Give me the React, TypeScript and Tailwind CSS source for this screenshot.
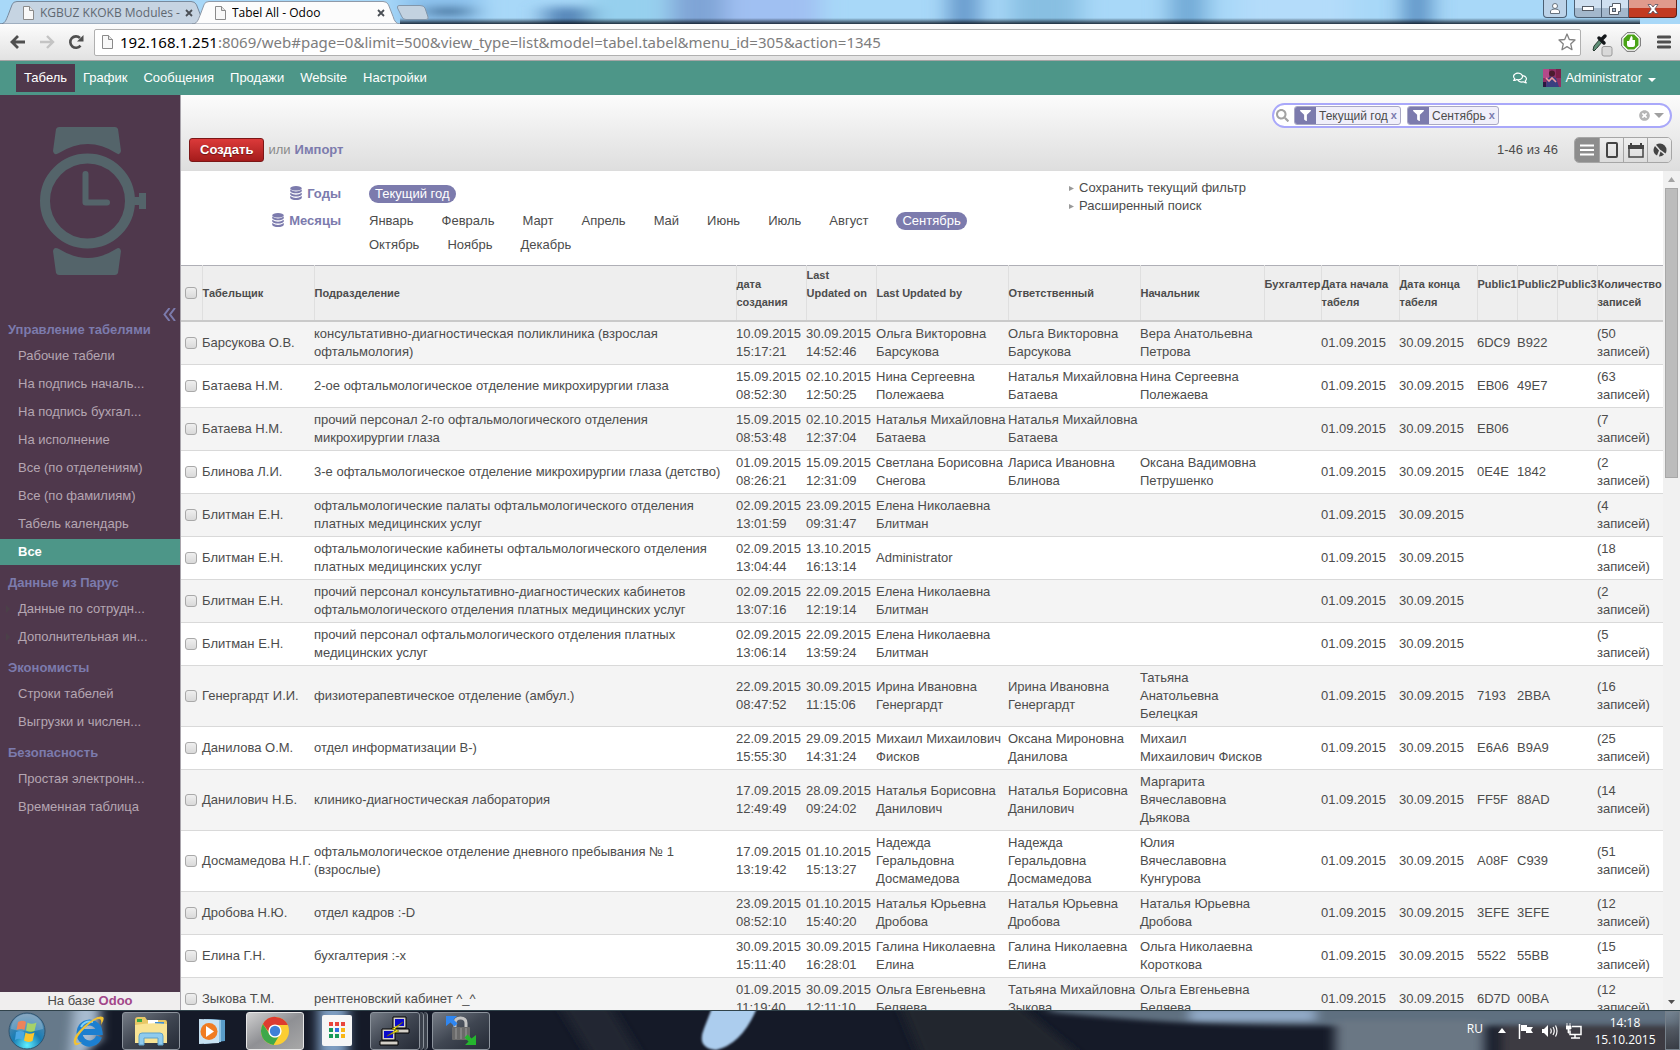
import { ReactNode } from "react";
import { FaFilter, FaRegComments, FaSearch, FaTimesCircle } from "react-icons/fa";

const menuSections = [
  {
    title: "Управление табелями",
    items: [
      "Рабочие табели",
      "На подпись началь...",
      "На подпись бухгал...",
      "На исполнение",
      "Все (по отделениям)",
      "Все (по фамилиям)",
      "Табель календарь",
      "Все",
    ],
  },
  { title: "Данные из Парус", items: ["Данные по сотрудн...", "Дополнительная ин..."], nested: true },
  { title: "Экономисты", items: ["Строки табелей", "Выгрузки и числен..."] },
  { title: "Безопасность", items: ["Простая электронн...", "Временная таблица"] },
];

const months = [
  "Январь", "Февраль", "Март", "Апрель", "Май", "Июнь", "Июль", "Август", "Сентябрь", "Октябрь", "Ноябрь", "Декабрь",
];

const columns = [
  { label: "Табельщик", width: "w-[112px]" },
  { label: "Подразделение", width: "" },
  { label: "дата\nсоздания", width: "w-[70px]" },
  { label: "Last\nUpdated on\n ", width: "w-[70px]" },
  { label: "Last Updated by", width: "w-[132px]" },
  { label: "Ответственный", width: "w-[132px]" },
  { label: "Начальник", width: "w-[124px]" },
  { label: "Бухгалтер\n ", width: "w-[57px]" },
  { label: "Дата начала\nтабеля", width: "w-[78px]" },
  { label: "Дата конца\nтабеля", width: "w-[78px]" },
  { label: "Public1\n ", width: "w-[40px]" },
  { label: "Public2\n ", width: "w-[40px]" },
  { label: "Public3\n ", width: "w-[40px]" },
  { label: "Количество\nзаписей", width: "w-[66px]" },
];

// name, department, created, updated, updated by, responsible, chief, key 1, key 2, record count
const rows: string[][] = [
  ["Барсукова О.В.", "консультативно-диагностическая поликлиника (взрослая\nофтальмология)", "10.09.2015\n15:17:21", "30.09.2015\n14:52:46", "Ольга Викторовна\nБарсукова", "Ольга Викторовна\nБарсукова", "Вера Анатольевна\nПетрова", "6DC9", "B922", "50"],
  ["Батаева Н.М.", "2-ое офтальмологическое отделение микрохирургии глаза", "15.09.2015\n08:52:30", "02.10.2015\n12:50:25", "Нина Сергеевна\nПолежаева", "Наталья Михайловна\nБатаева", "Нина Сергеевна\nПолежаева", "EB06", "49E7", "63"],
  ["Батаева Н.М.", "прочий персонал 2-го офтальмологического отделения\nмикрохирургии глаза", "15.09.2015\n08:53:48", "02.10.2015\n12:37:04", "Наталья Михайловна\nБатаева", "Наталья Михайловна\nБатаева", "", "EB06", "", "7"],
  ["Блинова Л.И.", "3-е офтальмологическое отделение микрохирургии глаза (детство)", "01.09.2015\n08:26:21", "15.09.2015\n12:31:09", "Светлана Борисовна\nСнегова", "Лариса Ивановна\nБлинова", "Оксана Вадимовна\nПетрушенко", "0E4E", "1842", "2"],
  ["Блитман Е.Н.", "офтальмологические палаты офтальмологического отделения\nплатных медицинских услуг", "02.09.2015\n13:01:59", "23.09.2015\n09:31:47", "Елена Николаевна\nБлитман", "", "", "", "", "4"],
  ["Блитман Е.Н.", "офтальмологические кабинеты офтальмологического отделения\nплатных медицинских услуг", "02.09.2015\n13:04:44", "13.10.2015\n16:13:14", "Administrator", "", "", "", "", "18"],
  ["Блитман Е.Н.", "прочий персонал консультативно-диагностических кабинетов\nофтальмологического отделения платных медицинских услуг", "02.09.2015\n13:07:16", "22.09.2015\n12:19:14", "Елена Николаевна\nБлитман", "", "", "", "", "2"],
  ["Блитман Е.Н.", "прочий персонал офтальмологического отделения платных\nмедицинских услуг", "02.09.2015\n13:06:14", "22.09.2015\n13:59:24", "Елена Николаевна\nБлитман", "", "", "", "", "5"],
  ["Генергардт И.И.", "физиотерапевтическое отделение (амбул.)", "22.09.2015\n08:47:52", "30.09.2015\n11:15:06", "Ирина Ивановна\nГенергардт", "Ирина Ивановна\nГенергардт", "Татьяна\nАнатольевна\nБелецкая", "7193", "2BBA", "16"],
  ["Данилова О.М.", "отдел информатизации B-)", "22.09.2015\n15:55:30", "29.09.2015\n14:31:24", "Михаил Михаилович\nФисков", "Оксана Мироновна\nДанилова", "Михаил\nМихаилович Фисков", "E6A6", "B9A9", "25"],
  ["Данилович Н.Б.", "клинико-диагностическая лаборатория", "17.09.2015\n12:49:49", "28.09.2015\n09:24:02", "Наталья Борисовна\nДанилович", "Наталья Борисовна\nДанилович", "Маргарита\nВячеславовна\nДьякова", "FF5F", "88AD", "14"],
  ["Досмамедова Н.Г.", "офтальмологическое отделение дневного пребывания № 1\n(взрослые)", "17.09.2015\n13:19:42", "01.10.2015\n15:13:27", "Надежда\nГеральдовна\nДосмамедова", "Надежда\nГеральдовна\nДосмамедова", "Юлия\nВячеславовна\nКунгурова", "A08F", "C939", "51"],
  ["Дробова Н.Ю.", "отдел кадров :-D", "23.09.2015\n08:52:10", "01.10.2015\n15:40:20", "Наталья Юрьевна\nДробова", "Наталья Юрьевна\nДробова", "Наталья Юрьевна\nДробова", "3EFE", "3EFE", "12"],
  ["Елина Г.Н.", "бухгалтерия :-x", "30.09.2015\n15:11:40", "30.09.2015\n16:28:01", "Галина Николаевна\nЕлина", "Галина Николаевна\nЕлина", "Ольга Николаевна\nКороткова", "5522", "55BB", "15"],
  ["Зыкова Т.М.", "рентгеновский кабинет ^_^", "01.09.2015\n11:19:40", "30.09.2015\n12:11:10", "Ольга Евгеньевна\nБеляева", "Татьяна Михайловна\nЗыкова", "Ольга Евгеньевна\nБеляева", "6D7D", "00BA", "12"],
];

function PageIcon() {
  return (
    <svg width="11" height="14" viewBox="0 0 11 14" className="shrink-0">
      <path d="M.5.5h6l4 4v9H.5z" fill="#f8f8f8" stroke="#8a8a8a" />
      <path d="M6.500.500v4h4" fill="#e4e4e4" stroke="#8a8a8a" />
    </svg>
  );
}

function CloseGlyph() {
  return (
    <svg width="8" height="8" viewBox="0 0 8 8">
      <path d="M1 1l6 6M7 1L1 7" stroke="#4a4f55" strokeWidth="1.800" />
    </svg>
  );
}

function Tab({ title, active }: { title: string; active?: boolean }) {
  return (
    <div className={active ? "relative z-10 -ml-4 w-[208px] self-stretch" : "relative w-[208px] self-stretch"}>
      <svg className="absolute inset-0 h-full w-full" viewBox="0 0 208 24" preserveAspectRatio="none">
        <path
          d="M0 24C5 24 6 20 8 15L12 4Q13 .5 17 .5H191Q195 .5 196.500 4L201 16Q203 24 208 24Z"
          fill={active ? "#fcfcfc" : "#c6d4e2"}
          stroke={active ? "#8b97a5" : "#75869a"}
        />
      </svg>
      <div className="relative flex h-full items-center pr-[15px] pl-[23px]">
        <PageIcon />
        <span className={active ? "ml-[6px] flex-1 truncate text-[12px] text-black" : "ml-[6px] flex-1 truncate text-[12px] text-[#5f6871]"}>
          {title}
        </span>
        <button aria-label="Закрыть вкладку"><CloseGlyph /></button>
      </div>
    </div>
  );
}

function TitleBar() {
  return (
    <header className="relative flex h-6 shrink-0 items-stretch overflow-hidden bg-[#a4d0f0]">
      <svg className="absolute inset-0 h-full w-full" viewBox="0 0 1680 24" preserveAspectRatio="none">
        <defs>
          <filter id="soft" x="-20%" y="-50%" width="140%" height="200%"><feGaussianBlur stdDeviation="12 4" /></filter>
          <linearGradient id="edge" x1="0" y1="0" x2="0" y2="1">
            <stop offset="0" stopColor="#0a1420" stopOpacity="0" />
            <stop offset="1" stopColor="#0a1420" />
          </linearGradient>
        </defs>
        <rect width="1680" height="24" fill="#a8d8f8" />
        <g filter="url(#soft)">
          <rect x="400" y="-15" width="80" height="54" fill="#8ec3ee" />
          <rect x="425" y="7" width="46" height="9" fill="#3f6f9a" />
          <rect x="545" y="7" width="45" height="30" fill="#5585b8" />
          <rect x="590" y="-15" width="75" height="54" fill="#96d0ee" />
          <rect x="670" y="-15" width="55" height="54" fill="#7fa4d6" />
          <rect x="725" y="-15" width="95" height="54" fill="#a0c0f2" />
          <rect x="950" y="-15" width="28" height="54" fill="#5f92c6" />
          <rect x="1010" y="-15" width="70" height="54" fill="#88bfe2" />
          <rect x="1170" y="-15" width="35" height="54" fill="#6fa8d4" />
          <rect x="1240" y="-15" width="110" height="54" fill="#b4dcfa" />
          <rect x="1405" y="-15" width="24" height="54" fill="#4f86bc" />
        </g>
        <rect x="400" y="18" width="1240" height="7" fill="url(#edge)" />
      </svg>
      <div className="relative flex flex-1 font-['Open_Sans','Noto_Sans',sans-serif]">
        <div className="flex pt-px">
          <Tab title="KGBUZ KKOKB Modules -" />
          <Tab title="Tabel All - Odoo" active />
          <button aria-label="Новая вкладка" className="mt-1 -ml-1 h-[15px]">
            <svg width="34" height="15" viewBox="0 0 34 15">
              <path d="M3 .5H24Q28 .5 29 3L32 12Q33 14.500 30 14.500H10Q7 14.500 6 12L1.500 3Q1 .5 3 .5Z" fill="#c3d2e0" stroke="#8296aa" />
            </svg>
          </button>
        </div>
        <div className="ml-auto flex items-start pr-[3px]">
          <button aria-label="Пользователь" className="mr-[7px] flex h-[18px] w-6 items-center justify-center rounded-b border border-t-0 border-[#4b5f73] bg-[#bcd3e8]">
            <svg width="10" height="11" viewBox="0 0 10 11"><circle cx="5" cy="3" r="2.500" fill="#fff" stroke="#66727e" /><path d="M.5 10.500V8Q1 6 5 6t4.500 2v2.500z" fill="#fff" stroke="#66727e" /></svg>
          </button>
          <button aria-label="Свернуть" className="flex h-[18px] w-7 items-center justify-center rounded-bl border border-t-0 border-[#4b5f73] bg-linear-to-b from-[#cfe0f0] from-50% to-[#a3b8cc] to-50%">
            <svg width="12" height="5" viewBox="0 0 12 5"><rect x=".5" y=".5" width="11" height="4" fill="#fff" stroke="#555c66" /></svg>
          </button>
          <button aria-label="Восстановить" className="flex h-[18px] w-[27px] items-center justify-center border-r border-b border-[#4b5f73] bg-linear-to-b from-[#cfe0f0] from-50% to-[#a3b8cc] to-50%">
            <svg width="12" height="12" viewBox="0 0 12 12"><path d="M3.500.500h8v8h-2v3h-9v-8h3z" fill="#fff" stroke="#555c66" /><rect x="3.500" y="5.500" width="3" height="3" fill="#a9bdd0" stroke="#555c66" /></svg>
          </button>
          <button aria-label="Закрыть" className="flex h-[18px] w-12 items-center justify-center rounded-br border border-t-0 border-l-0 border-[#5a2018] bg-linear-to-b from-[#e09a8c] from-50% to-[#c23a22] to-50%">
            <svg width="12" height="10" viewBox="0 0 12 10"><path d="M1 .5h3l2 2.500 2-2.500h3L7.800 5 11 9.500H8L6 7 4 9.500H1L4.200 5z" fill="#fff" stroke="#565060" strokeWidth=".8" /></svg>
          </button>
        </div>
      </div>
    </header>
  );
}

function Toolbar() {
  return (
    <div className="flex h-[37px] shrink-0 items-center border-b border-[#a5a5a5] bg-linear-to-b from-[#fcfcfc] to-[#e2e2e2] pr-[9px] pl-[10px]">
      <button aria-label="Назад">
        <svg width="16" height="14" viewBox="0 0 16 14"><path d="M15 7H2.500M8 1L2 7l6 6" fill="none" stroke="#4f4f4f" strokeWidth="2.800" /></svg>
      </button>
      <button aria-label="Вперёд" className="ml-[13px]">
        <svg width="16" height="14" viewBox="0 0 16 14"><path d="M1 7h12.500M8 1l6 6-6 6" fill="none" stroke="#c4c4c4" strokeWidth="2.400" /></svg>
      </button>
      <button aria-label="Обновить" className="ml-[13px]">
        <svg width="16" height="16" viewBox="0 0 16 16"><path d="M12.500 11.600A5.700 5.700 0 1 1 12 4" fill="none" stroke="#4f4f4f" strokeWidth="2.600" /><path d="M15.500 1v6.500H9z" fill="#4f4f4f" /></svg>
      </button>
      <div className="ml-[10px] flex h-[27px] min-w-0 flex-1 items-center rounded-[2px] border border-[#b0b0b0] bg-white pr-1 pl-[7px] font-['Noto_Sans','Open_Sans',sans-serif] text-[15px]">
        <PageIcon />
        <span className="ml-[7px] text-black">192.168.1.251</span>
        <input
          aria-label="Адрес"
          className="min-w-0 flex-1 bg-transparent text-[#7d7d7d] outline-none"
          defaultValue=":8069/web#page=0&limit=500&view_type=list&model=tabel.tabel&menu_id=305&action=1345"
        />
        <svg width="18" height="18" viewBox="0 0 18 18"><path d="M9 1l2.300 5.500 5.700.5-4.300 3.900 1.300 5.800L9 13.600l-5 3.100 1.300-5.800L1 7l5.700-.5z" fill="#fff" stroke="#828282" strokeWidth="1.300" strokeLinejoin="round" /></svg>
      </div>
      <svg className="mt-[6px] ml-[10px]" width="22" height="24" viewBox="0 0 22 24">
        <path d="M2 17l1-4 6-7 2.500 2.500-6 7-2.500 2.500z" fill="#5f8f77" stroke="#263a30" />
        <path d="M8 5l5 5M10 7l4-4" stroke="#14171a" strokeWidth="3.500" strokeLinecap="round" />
        <rect x="11" y="13.500" width="10" height="9.500" rx="2" fill="#d9d9d9" stroke="#9a9a9a" />
      </svg>
      <svg className="ml-2" width="20" height="20" viewBox="0 0 20 20">
        <path d="M6 .7h8L19.300 6v8L14 19.300H6L.7 14V6z" fill="#fff" stroke="#666" />
        <path d="M6.800 2.500h6.400l4.300 4.300v6.400l-4.300 4.300H6.800l-4.300-4.300V6.800z" fill="#4aa316" />
        <path d="M6 9h2l2-5q2 0 1.500 4H14v5q0 2-2 2H8q-2 0-2-2z" fill="#fff" />
      </svg>
      <button aria-label="Меню" className="ml-4">
        <svg width="14" height="14" viewBox="0 0 14 14"><path d="M1 2h12M1 7h12M1 12h12" stroke="#4f4f4f" strokeWidth="2.800" strokeLinecap="round" /></svg>
      </button>
    </div>
  );
}

function TopNav() {
  const links = ["График", "Сообщения", "Продажи", "Website", "Настройки"];
  return (
    <nav className="flex h-[34px] shrink-0 items-center bg-[#4d9688] pr-6 pl-4 text-[13px] text-white">
      <a href="#tabel" className="flex h-7 items-center bg-[#4f384c] px-2">Табель</a>
      {links.map((l) => (
        <a key={l} href={"#" + l} className="flex h-7 items-center px-2">{l}</a>
      ))}
      <button aria-label="Сообщения" className="ml-auto"><FaRegComments size={14} /></button>
      <svg className="ml-4" width="18" height="18" viewBox="0 0 18 18">
        <rect width="18" height="18" fill="#8f2f66" />
        <path d="M0 0h6v9H0z" fill="#b34a8a" /><path d="M13 0h5v9h-5z" fill="#7a1f4a" />
        <path d="M3 18l1-8 4-3 5 2 3 9z" fill="#3a3f80" /><circle cx="9" cy="4.500" r="3" fill="#4a1c2e" />
        <path d="M3 9l3 3 3-3 4 4" stroke="#f09aa0" strokeWidth="1.600" fill="none" /><path d="M0 13h3v5H0z" fill="#2b1740" />
      </svg>
      <button className="ml-1 flex items-center">
        Administrator
        <svg className="mt-1 ml-[6px]" width="8" height="4" viewBox="0 0 8 4"><path d="M0 0h8L4 4z" fill="#fff" /></svg>
      </button>
    </nav>
  );
}

function Sidebar() {
  return (
    <aside className="flex w-[181px] shrink-0 flex-col border-r border-[#a9a5ac] bg-[#4f384c] text-[13px]">
      <svg className="mt-[31px] ml-10 shrink-0" width="107" height="150" viewBox="0 0 107 150">
        <g fill="#54646a">
          <path d="M19 1H75Q77 1 78 3L81 25Q80 30 76 27Q48 9 19 27Q14 30 13 25L16 3Q17 1 19 1Z" />
          <path d="M19 149H75Q77 149 78 147L81 125Q80 120 76 123Q48 141 19 123Q14 120 13 125L16 147Q17 149 19 149Z" />
          <path d="M94 71h5v-4h7v16h-7v-4h-5z" />
        </g>
        <circle cx="47.500" cy="75" r="42.500" fill="none" stroke="#54646a" strokeWidth="10" />
        <path d="M45.500 48V76.500H67" fill="none" stroke="#54646a" strokeWidth="6" strokeLinecap="round" strokeLinejoin="round" />
      </svg>
      <button aria-label="Свернуть меню" className="mt-8 mr-1 self-end">
        <svg width="13" height="13" viewBox="0 0 13 13"><path d="M6.500 0L1.500 6.500l5 6.500M12 0L7 6.500l5 6.500" fill="none" stroke="#7c7bad" strokeWidth="2" /></svg>
      </button>
      <div className="-mt-[7px]">
        {menuSections.map((s) => (
          <section key={s.title} className="pt-[7px]">
            <h2 className="mb-1 pl-2 leading-[18px] font-bold text-[#7c7bad]">{s.title}</h2>
            {s.items.map((item) => (
              <a
                key={item}
                href={"#" + item}
                className={
                  item === "Все"
                    ? "relative mb-[2px] block bg-[#4d9688] pl-[18px] leading-[26px] font-bold text-white"
                    : "relative mb-[2px] block pl-[18px] leading-[26px] text-[#b5a6b2]"
                }
              >
                {s.nested && (
                  <svg className="absolute top-[9px] left-[6px]" width="4" height="8" viewBox="0 0 4 8"><path d="M0 0l4 4-4 4z" fill="#4b4048" /></svg>
                )}
                {item}
              </a>
            ))}
          </section>
        ))}
      </div>
      <div className="mt-auto bg-[#f0eeee] text-center leading-[18px] text-[#4c4c4c]">
        На базе <a href="#odoo" className="font-bold text-[#a24689]">Odoo</a>
      </div>
    </aside>
  );
}

function Facet({ label }: { label: string }) {
  return (
    <span className="mr-[6px] flex h-[19px] items-center overflow-hidden rounded-[3px] border border-[#a9a8c4] bg-[#f0effa] text-[12px] text-[#4c4c4c]">
      <span className="flex h-full w-[21px] items-center justify-center bg-[#7c7bad] text-white"><FaFilter size={11} /></span>
      <span className="pl-[3px] whitespace-nowrap">{label}</span>
      <button aria-label={"Убрать " + label} className="px-[3px] text-[11px] font-bold text-[#7c7bad]">x</button>
    </span>
  );
}

function ViewButton({ label, active, children }: { label: string; active?: boolean; children: ReactNode }) {
  return (
    <button
      aria-label={label}
      className={
        active
          ? "flex w-6 items-center justify-center bg-[#8d8d8d]"
          : "flex w-6 items-center justify-center border-l border-[#a6a6a6] bg-linear-to-b from-[#efefef] to-[#dcdcdc]"
      }
    >
      {children}
    </button>
  );
}

function ControlPanel() {
  return (
    <div className="flex h-[76px] shrink-0 flex-col border-b border-[#dcdcdc] bg-linear-to-b from-[#fcfcfc] to-[#dedede] pt-2 pr-2 pl-2">
      <div className="flex h-[25px] w-[400px] items-center self-end rounded-full border-2 border-[#a9a8fa] bg-white pr-[6px] pl-[2px]">
        <FaSearch size={13} className="mr-[5px] text-[#a3a3a3]" />
        <Facet label="Текущий год" />
        <Facet label="Сентябрь" />
        <input aria-label="Поиск" className="min-w-0 flex-1 bg-transparent outline-none" />
        <button aria-label="Очистить" className="text-[#b5b5b5]"><FaTimesCircle size={11} /></button>
        <button aria-label="Раскрыть поиск" className="ml-1">
          <svg width="10" height="5" viewBox="0 0 10 5"><path d="M0 0h10L5 5z" fill="#a0a0a0" /></svg>
        </button>
      </div>
      <div className="mt-[9px] flex items-center text-[13px]">
        <button className="h-6 rounded-[3px] border border-[#7c1717] bg-linear-to-b from-[#dc3a3a] to-[#a51b1b] px-[10px] font-bold text-white [text-shadow:0_1px_1px_rgba(0,0,0,0.4)]">
          Создать
        </button>
        <span className="ml-1 text-[#8a8a8a]">или</span>
        <a href="#import" className="ml-1 font-bold text-[#7c7bad]">Импорт</a>
        <span className="mr-4 ml-auto text-[#4c4c4c]">1-46 из 46</span>
        <div className="flex h-[26px] overflow-hidden rounded-[5px] border border-[#a6a6a6]">
          <ViewButton label="Список" active>
            <svg width="14" height="12" viewBox="0 0 14 12"><path d="M0 1.500h14M0 6h14M0 10.500h14" stroke="#fff" strokeWidth="2" /></svg>
          </ViewButton>
          <ViewButton label="Форма">
            <svg width="12" height="16" viewBox="0 0 12 16"><rect x="1" y="1" width="10" height="14" rx="1" fill="none" stroke="#444" strokeWidth="2" /></svg>
          </ViewButton>
          <ViewButton label="Календарь">
            <svg width="16" height="16" viewBox="0 0 16 16"><path d="M1 4v11h14V4" fill="none" stroke="#444" strokeWidth="1.500" /><path d="M0 3h2V1h2v2h8V1h2v2h2v4H0z" fill="#444" /></svg>
          </ViewButton>
          <ViewButton label="График">
            <svg width="14" height="14" viewBox="0 0 14 14"><path d="M7 .5A6.500 6.500 0 0 1 13.500 7q0 2-1 3.500L7 6.500 3 1.800Q5 .5 7 .5z" fill="#444" /><path d="M2 3L6 7.500 4 12.500Q.5 10.500.5 7 .6 4.800 2 3z" fill="#444" /><path d="M7.500 8.500l3.500 3Q9 13.500 6 13.400z" fill="#444" /></svg>
          </ViewButton>
        </div>
      </div>
    </div>
  );
}

function GroupLabel({ text }: { text: string }) {
  return (
    <div className="flex w-[160px] items-center justify-end gap-[5px] leading-6 font-bold text-[#7c7bad]">
      <svg className="mb-[3px]" width="12" height="14" viewBox="0 0 12 14" fill="#7c7bad">
        <ellipse cx="6" cy="2.300" rx="5.800" ry="2.300" />
        <path d="M.2 3.600Q6 7.400 11.800 3.600V5.200Q10.500 7.200 6 7.200T.2 5.200z" />
        <path d="M.2 6.800Q6 10.600 11.800 6.800V8.500Q10.500 10.500 6 10.500T.2 8.500z" />
        <path d="M.2 10.100Q6 13.900 11.800 10.100V11.900Q10.500 13.900 6 13.900T.2 11.900z" />
      </svg>
      {text}
    </div>
  );
}

const pill = "flex h-[18px] items-center rounded-full bg-[#7c7bad] px-[6px] text-white";

function Filters() {
  return (
    <div className="flex h-[94px] shrink-0 justify-between text-[13px] text-[#4c4c4c]">
      <div className="w-[860px] pt-[11px]">
        <div className="flex items-center">
          <GroupLabel text="Годы" />
          <button className={"ml-7 " + pill}>Текущий год</button>
        </div>
        <div className="mt-[3px] flex items-start">
          <GroupLabel text="Месяцы" />
          <div className="ml-7 flex flex-1 flex-wrap items-center gap-x-[28px]">
            {months.map((m) => (
              <span key={m} className="flex h-6 items-center">
                <button className={m === "Сентябрь" ? pill : ""}>{m}</button>
              </span>
            ))}
          </div>
        </div>
      </div>
      <ul className="w-[594px] pt-2 leading-[18px]">
        {["Сохранить текущий фильтр", "Расширенный поиск"].map((t) => (
          <li key={t} className="flex items-center">
            <svg className="mr-[5px]" width="5" height="5" viewBox="0 0 5 5"><path d="M0 0l5 2.500L0 5z" fill="#999" /></svg>
            <a href={"#" + t}>{t}</a>
          </li>
        ))}
      </ul>
    </div>
  );
}

function Check({ label }: { label: string }) {
  return (
    <input
      type="checkbox"
      aria-label={label}
      className="block h-[12px] w-[12px] appearance-none rounded-[3px] border border-[#a9a9a9] bg-linear-to-b from-[#efefef] to-[#d9d9d9]"
    />
  );
}

function Records() {
  return (
    <table className="w-full table-fixed border-collapse text-left text-[13px] leading-[18px] text-[#4c4c4c]">
      <colgroup>
        <col className="w-[21px]" />
        {columns.map((c) => <col key={c.label} className={c.width} />)}
      </colgroup>
      <thead>
        <tr className="border-t border-b-2 border-t-[#afafb6] border-b-[#cacaca] bg-[#eeeeee] text-[11px]">
          <th className="pl-1"><Check label="Выбрать все" /></th>
          {columns.map((c) => (
            <th key={c.label} className="h-[55px] border-l border-[#dfdfdf] p-0 font-bold whitespace-pre">{c.label}</th>
          ))}
        </tr>
      </thead>
      <tbody>
        {rows.map((r, i) => (
          <tr key={i} className="border-b border-[#d9d9d9] odd:bg-[#f4f4f4] even:bg-white">
            <td className="pl-1"><Check label={r[0]} /></td>
            {[...r.slice(0, 7), "", "01.09.2015", "30.09.2015", r[7], r[8], "", `(${r[9]}\nзаписей)`].map((v, j) => (
              <td key={j} className="px-0 py-[3px] whitespace-pre">{v}</td>
            ))}
          </tr>
        ))}
      </tbody>
    </table>
  );
}

function ScrollBar() {
  return (
    <div className="flex w-[17px] shrink-0 flex-col items-center bg-[#f1f1f1]">
      <svg className="my-[6px] shrink-0" width="7" height="5" viewBox="0 0 7 5"><path d="M0 5h7L3.500 0z" fill="#a3a3a3" /></svg>
      <div className="h-[290px] w-[13px] border border-[#a8a8a8] bg-[#bcbcbc]" />
      <svg className="mt-auto mb-[6px]" width="7" height="4" viewBox="0 0 7 4"><path d="M0 0h7L3.500 4z" fill="#505050" /></svg>
    </div>
  );
}

const taskButton =
  "flex h-[38px] items-center justify-center rounded-[3px] border border-[#8c939c] bg-linear-to-br from-[#8d949d]/80 via-[#4a515c]/80 to-[#2a303b]/80";

function Taskbar() {
  return (
    <footer className="relative flex h-10 shrink-0 items-center overflow-hidden border-t border-[#31434b] bg-[#151a28] font-['Open_Sans','Noto_Sans',sans-serif] text-white">
      <svg className="absolute inset-0 h-full w-full" viewBox="0 0 1680 40" preserveAspectRatio="none">
        <defs>
          <filter id="haze" x="-20%" y="-50%" width="140%" height="200%"><feGaussianBlur stdDeviation="6 3" /></filter>
          <filter id="faint" x="-20%" y="-20%" width="140%" height="140%"><feGaussianBlur stdDeviation="1" /></filter>
        </defs>
        <rect width="1680" height="40" fill="#151a28" />
        <g filter="url(#haze)">
          <rect x="-20" y="-10" width="105" height="60" fill="#66798a" />
          <path d="M75-5h25v35q-15 10-15 20h-15z" fill="#a8bcd0" />
          <rect x="318" y="-5" width="30" height="50" fill="#7d9cc0" />
          <path d="M560-5h50l30 50h-50z" fill="#242833" />
          <path d="M900-5h120l60 50H920z" fill="#20252f" />
          <path d="M1050-5h630v20H1300q-120 0-250-14z" fill="#5f6f80" />
          <rect x="1190" y="-2" width="125" height="12" fill="#90a9c6" />
          <rect x="1335" y="10" width="150" height="40" fill="#6b7784" />
          <rect x="1500" y="14" width="180" height="36" fill="#3c3a42" />
        </g>
        <path d="M712-3h45Q742 34 716 40 696 38 704 18z" fill="#accdee" filter="url(#faint)" />
      </svg>
      <div className="relative flex flex-1 items-center pr-[98px] pl-2">
        <button aria-label="Пуск">
          <svg width="38" height="38" viewBox="0 0 38 38">
            <defs><radialGradient id="orb" cx=".5" cy=".9" r=".9"><stop offset="0" stopColor="#5ff0ff" /><stop offset=".45" stopColor="#187cb4" /><stop offset="1" stopColor="#6b8fae" /></radialGradient></defs>
            <circle cx="19" cy="19" r="18" fill="url(#orb)" stroke="#31546e" />
            <path d="M10 10q5-2.500 8 0l-1.500 8q-4-2-8 0z" fill="#e8602c" /><path d="M19.500 10.500q4 2.500 9 0l-2 8.500q-5 2-8.500-.5z" fill="#8dc63f" />
            <path d="M8 20q4-2 8.500 0L15 28q-4-2.500-8 0z" fill="#4aa7e4" /><path d="M17.500 20.500q4 2.500 9 0L24.500 29q-5 2-8.500-.5z" fill="#fbc52d" />
            <path d="M3 17A16 15 0 0 1 35 17Q19 22 3 17z" fill="#fff" opacity=".22" />
          </svg>
        </button>
        <svg className="ml-[26px]" width="34" height="32" viewBox="0 0 34 32">
          <path d="M27 21.500A10 10.500 0 1 1 27.500 17H10" fill="none" stroke="#1c7fd0" strokeWidth="6" />
          <path d="M9 12Q13 5 21 7" fill="none" stroke="#7fd0f8" strokeWidth="2" />
          <path d="M3 30Q-2 24 12 11 26-1 31 2q2 2-2 8 1-6-2-6-5 0-14 9T4 27q1 2 6 0Q5 31 3 30z" fill="#f2c233" />
        </svg>
        <div className={"ml-4 w-[58px] " + taskButton}>
          <svg width="34" height="30" viewBox="0 0 34 30">
            <path d="M1 4q0-3 3-3h7l2 3h18q2 0 2 2v20H1z" fill="#e8c766" /><path d="M3 3h5v3H3z" fill="#39a845" /><path d="M14 4h10v4H14z" fill="#fff" /><path d="M21 6h9v3h-9z" fill="#3f8fd8" />
            <path d="M1 9q16-3 32-1v19H1z" fill="#f8e394" /><path d="M5 29v-9q0-3 3-3h18q3 0 3 3v9h-5v-7H10v7z" fill="#8fcbee" stroke="#5da1cc" />
          </svg>
        </div>
        <svg className="ml-[19px]" width="26" height="28" viewBox="0 0 26 28">
          <path d="M8 2l18 1v21l-18 2z" fill="#5a9cc8" /><path d="M5 2l17 1v22l-17 2z" fill="#8fc4e4" /><path d="M0 2l20 1v23L0 27z" fill="#c8e2f2" />
          <circle cx="10" cy="14.500" r="8.500" fill="#f07c22" /><path d="M7 9l8 5.500L7 20z" fill="#fff" />
        </svg>
        <div className="ml-[21px] flex h-[38px] w-[58px] items-center justify-center rounded-[3px] border border-[#e6e6e6] bg-linear-to-br from-[#d0d0d0] via-[#8f9094] to-[#a8a8a8]">
          <svg width="30" height="30" viewBox="0 0 30 30">
            <circle cx="15" cy="15" r="14" fill="#fbce33" />
            <path d="M2.900 8A14 14 0 0 1 27.800 9H15a6 6 0 0 0-5.800 7.500z" fill="#dd3b2f" />
            <path d="M2.900 8A14 14 0 0 0 13.500 29l5.500-9A6 6 0 0 1 9.500 18z" fill="#3ea84a" />
            <circle cx="15" cy="15" r="6.600" fill="#fff" /><circle cx="15" cy="15" r="5.200" fill="#3f80d6" />
          </svg>
        </div>
        <svg className="ml-[18px]" width="30" height="31" viewBox="0 0 30 31">
          <rect width="30" height="31" rx="2" fill="#f6f6f6" />
          <path d="M7 7h4v4H7zM13 7h4v4h-4zM19 7h4v4h-4z" fill="#e8453c" />
          <path d="M7 13h4v4H7zM7 19h4v4H7zM13 19h4v4h-4z" fill="#189a58" />
          <path d="M13 13h4v4h-4z" fill="#2f6fe0" /><path d="M19 13h4v4h-4zM19 19h4v4h-4z" fill="#f9b616" />
        </svg>
        <div className={"ml-[18px] w-[50px] " + taskButton}>
          <svg width="32" height="30" viewBox="0 0 32 30">
            <path d="M14 1h13v11H14zM12 13h18v4H12z" fill="#d4d0c8" stroke="#000" /><path d="M16 3h9v7h-9z" fill="#0a0acc" />
            <path d="M3 13h13v11H3zM1 25h18v4H1z" fill="#d4d0c8" stroke="#000" /><path d="M5 15h9v7H5z" fill="#0a0acc" />
            <path d="M24 6L13 13l4 1-9 6 12-5-4-2z" fill="#ffef1e" stroke="#6b6400" strokeWidth=".6" />
          </svg>
        </div>
        <div className="h-[38px] w-1 rounded-r border-r border-[#8c939c] bg-[#3a404b]" />
        <div className="h-[38px] w-1 rounded-r border-r border-[#8c939c] bg-[#3a404b]" />
        <div className={"ml-1 w-[58px] " + taskButton}>
          <svg width="32" height="31" viewBox="0 0 32 31">
            <path d="M10 12V8q0-5 5.500-5T21 8v4" fill="none" stroke="#c4c4c4" strokeWidth="3" /><rect x="7" y="12" width="18" height="13" rx="1" fill="#6a6a6a" /><path d="M11 13v11M16 13v11M21 13v11" stroke="#9a9a9a" />
            <path d="M1 1h11L8.500 4.500l4 4-3 3-4-4L1 11z" fill="#2f86f0" /><path d="M31 30H20l3.500-3.500-4-4 3-3 4 4L31 20z" fill="#25b52e" />
          </svg>
        </div>
        <span className="mr-[15px] mb-1 ml-auto text-[12px]">RU</span>
        <svg width="8" height="5" viewBox="0 0 8 5"><path d="M0 5h8L4 0z" fill="#fff" /></svg>
        <svg className="ml-3" width="16" height="16" viewBox="0 0 16 16"><path d="M1.500 1v15" stroke="#fff" strokeWidth="1.500" /><path d="M3 2h6v2h6l-2 3 2 3H8V8H3z" fill="#fff" /></svg>
        <svg className="ml-2" width="16" height="14" viewBox="0 0 16 14"><path d="M0 5h2l4-4v12L2 9H0z" fill="#fff" /><path d="M8.500 4.500q1.500 2.500 0 5M11 3q2.500 4 0 8M13.500 1.500q3 5.500 0 11" fill="none" stroke="#fff" strokeWidth="1.200" /></svg>
        <svg className="ml-2" width="16" height="16" viewBox="0 0 16 16"><path d="M6 3.500h9v8H4v-4M9 12v3M5 15h9" fill="none" stroke="#fff" strokeWidth="1.500" /><path d="M1 0v3M4 0v3M0 3h5v3H3v4H2V6H0z" fill="#fff" stroke="#fff" strokeWidth=".8" /></svg>
      </div>
      <div className="absolute inset-y-0 right-0 flex">
        <div className="flex w-[80px] flex-col items-center justify-center text-[12px] leading-[17px]">
          <time>14:18</time>
          <time>15.10.2015</time>
        </div>
        <button aria-label="Показать рабочий стол" className="w-[15px] border border-[#76808a] bg-linear-to-b from-[#7d8b98]/70 to-[#3a4048]/70" />
      </div>
    </footer>
  );
}

export default function App() {
  return (
    <div className="flex h-screen flex-col overflow-hidden bg-white font-['Liberation_Sans',Arial,sans-serif]">
      <TitleBar />
      <Toolbar />
      <TopNav />
      <div className="flex min-h-0 flex-1">
        <Sidebar />
        <main className="flex min-w-0 flex-1 flex-col">
          <ControlPanel />
          <div className="flex min-h-0 flex-1">
            <div className="min-w-0 flex-1 overflow-hidden">
              <Filters />
              <Records />
            </div>
            <ScrollBar />
          </div>
        </main>
      </div>
      <Taskbar />
    </div>
  );
}
